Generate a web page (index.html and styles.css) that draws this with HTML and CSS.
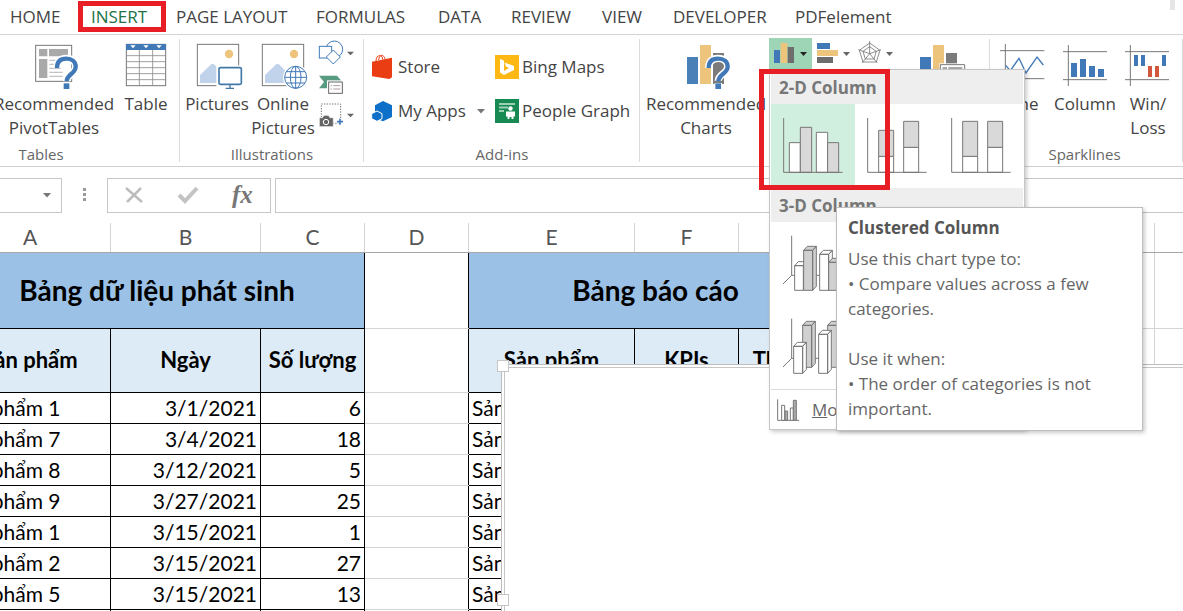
FILE: index.html
```html
<!DOCTYPE html>
<html lang="vi">
<head>
<meta charset="utf-8">
<title>Excel - Insert chart</title>
<link rel="stylesheet" href="styles.css">
</head>
<body>
<nav class="tabs">
  <a href="#">HOME</a>
  <a href="#" class="current">INSERT</a>
  <a href="#">PAGE LAYOUT</a>
  <a href="#">FORMULAS</a>
  <a href="#">DATA</a>
  <a href="#">REVIEW</a>
  <a href="#">VIEW</a>
  <a href="#">DEVELOPER</a>
  <a href="#">PDFelement</a>
  <span class="tab-grip"></span>
</nav>

<div class="ribbon">
  <section class="group group-tables">
    <div class="tools">
      <button class="big wide">
        <svg width="48" height="50" viewBox="90 126 144 150">
          <rect x="107" y="136" width="108" height="108" fill="#fff" stroke="#777" stroke-width="3"/>
          <path d="M117 147h25v22h-25zM147 147h57v22h-57zM117 177h25v57h-25z" fill="#a9a9a9"/>
          <path d="M148 181h38M148 193h34M148 205h34M148 217h40M148 229h40" stroke="#c3c3c3" stroke-width="4"/>
          <path d="M171 204c0-20 11-29 28-29s28 9 28 25c0 21-27 22-27 44M200 251v16" fill="none" stroke="#fff" stroke-width="22"/>
          <path d="M171 204c0-20 11-28 28-28s28 9 28 24c0 21-27 23-27 44" fill="none" stroke="#4179b8" stroke-width="13"/>
          <path d="M191 250h17v17h-17z" fill="#4179b8"/>
        </svg>
        <span>Recommended<br>PivotTables</span>
      </button>
      <button class="big narrow">
        <svg width="48" height="50" viewBox="366 126 144 150">
          <rect x="379" y="133" width="118" height="124" fill="#fff" stroke="#777" stroke-width="3"/>
          <path d="M418 150v107M458 150v107M379 167h118M379 185h118M379 203h118M379 221h118M379 239h118" stroke="#8a8a8a" stroke-width="2.500"/>
          <path d="M378 132h120v18H378z" fill="#4179b8"/>
          <path d="M391 136h16l-8 9zM430 136h16l-8 9zM469 136h16l-8 9z" fill="#fff"/>
        </svg>
        <span>Table</span>
      </button>
    </div>
    <h2>Tables</h2>
  </section>

  <section class="group group-illustrations">
    <div class="tools">
      <button class="big medium">
        <svg width="48" height="50" viewBox="576 126 144 150">
          <rect x="589" y="133" width="124" height="124" fill="#fff" stroke="#777" stroke-width="3"/>
          <circle cx="684" cy="162" r="12.500" fill="#edc47c"/>
          <path d="M597 249v-24l32-31c5-4 8-3 12 1l22 22v32z" fill="#c0d3ea"/>
          <path d="M646 196h82v76h-82z" fill="#fff"/>
          <rect x="654" y="203" width="67" height="50" rx="4" fill="#fff" stroke="#4179a8" stroke-width="5"/>
          <path d="M687 254v10M674 265h25" stroke="#4179a8" stroke-width="4"/>
        </svg>
        <span>Pictures</span>
      </button>
      <button class="big medium">
        <svg width="48" height="50" viewBox="777 126 144 150">
          <rect x="787" y="133" width="124" height="124" fill="#fff" stroke="#777" stroke-width="3"/>
          <circle cx="882" cy="162" r="12.500" fill="#edc47c"/>
          <path d="M795 249v-24l32-31c5-4 8-3 12 1l22 22v32z" fill="#c0d3ea"/>
          <circle cx="887" cy="232" r="38" fill="#fff"/>
          <g fill="none" stroke="#4179b8" stroke-width="3">
            <circle cx="887" cy="232" r="33"/>
            <ellipse cx="887" cy="232" rx="16" ry="33"/>
            <path d="M887 199v66M854 232h66M859 215h56M859 249h56"/>
          </g>
        </svg>
        <span>Online<br>Pictures</span>
      </button>
      <div class="stack">
        <button class="small" aria-label="Shapes">
          <svg width="37" height="31" viewBox="957 112 111 93">
            <circle cx="1003" cy="149" r="25" fill="#fff" stroke="#4179b8" stroke-width="3"/>
            <rect x="958" y="140" width="37" height="35" fill="#fff" stroke="#4179b8" stroke-width="3"/>
            <path d="M1000 151l21 21-21 21-21-21z" fill="#fff" stroke="#4179b8" stroke-width="3"/>
            <path d="M1041 156h21l-10.500 11z" fill="#666"/>
          </svg>
        </button>
        <button class="small" aria-label="SmartArt">
          <svg width="37" height="31" viewBox="957 205 111 93">
            <path d="M957 228h54l17 20-17 18h-54l15-19z" fill="#579b80"/>
            <rect x="985" y="246" width="43" height="36" fill="#fff" stroke="#fff" stroke-width="8"/>
            <rect x="986" y="247" width="41" height="34" fill="#fff" stroke="#666" stroke-width="3"/>
            <path d="M992 258h4M1000 258h21M992 268h4M1000 268h21" stroke="#a08888" stroke-width="2.500"/>
          </svg>
        </button>
        <button class="small" aria-label="Screenshot">
          <svg width="37" height="31" viewBox="957 298 111 93">
            <rect x="964" y="313" width="58" height="58" fill="none" stroke="#555" stroke-width="2.500" stroke-dasharray="4 4"/>
            <path d="M958 354h9l5-7h13l5 7h10v27h-42z" fill="#666" stroke="#fff" stroke-width="2"/>
            <circle cx="978" cy="367" r="8" fill="#666" stroke="#fff" stroke-width="3"/>
            <path d="M1020 356v20M1010 366h20" stroke="#fff" stroke-width="9"/>
            <path d="M1020 357v18M1011 366h18" stroke="#4179b8" stroke-width="5"/>
            <path d="M1041 342h21l-10.500 11z" fill="#666"/>
          </svg>
        </button>
      </div>
    </div>
    <h2>Illustrations</h2>
  </section>

  <section class="group group-addins">
    <div class="addins">
      <button class="line">
        <svg width="24" height="24" viewBox="36 162 72 72">
          <path d="M39 182l60-12v59l-8 5-52-8z" fill="#eb3d13"/>
          <path d="M51 180c0-11 5-16 11-16s9 4 9 12M59 177c1-10 5-14 9-14s9 4 10 11" fill="none" stroke="#eb3d13" stroke-width="3"/>
        </svg>Store</button>
      <button class="line">
        <svg width="24" height="24" viewBox="0 0 24 24">
          <path d="M0 0h24v24H0z" fill="#fdb813"/>
          <path d="M5 4l4 1.500v10.500l5-3-3-1.500-1.500-4L19 11v4l-10 5-4-2.500z" fill="#fff"/>
        </svg>Bing Maps</button>
      <button class="line">
        <svg width="24" height="24" viewBox="36 294 72 72">
          <path d="M72 300l27 13v35l-27 13-24-10v-38z" fill="#0d6fc7"/>
          <path d="M54 330l15 8v15l-15 8-16-8v-15z" fill="#0d6fc7" stroke="#fff" stroke-width="3"/>
        </svg>My Apps
        <svg class="arrow" width="8" height="5" viewBox="0 0 8 5"><path d="M0 0h8L4 4.500z" fill="#777"/></svg>
      </button>
      <button class="line">
        <svg width="24" height="24" viewBox="0 0 24 24">
          <path d="M0 0h24v24H0z" fill="#178a53"/>
          <path d="M4 5h16M4 8.500h9M4 12h5" stroke="#9bd0b5" stroke-width="2"/>
          <circle cx="15.500" cy="9.500" r="2.200" fill="#fff"/>
          <path d="M11 12.500h9v5h-1.500V20h-2v-2h-2v2h-2v-2.500H11z" fill="#fff"/>
        </svg>People Graph</button>
    </div>
    <h2>Add-ins</h2>
  </section>

  <section class="group group-charts">
    <div class="tools">
      <button class="big wide">
        <svg width="48" height="50" viewBox="966 126 144 150">
          <path d="M981 171h33v81h-33z" fill="#4a80b8"/>
          <path d="M1020 135h33v117h-33z" fill="#ecc47c"/>
          <path d="M1059 159h33v93h-33z" fill="#7b7b7b"/>
          <path d="M1046 204c0-20 11-29 28-29s29 9 29 25c0 21-28 22-28 42M1075 249v18" fill="none" stroke="#fff" stroke-width="22"/>
          <path d="M1046 204c0-20 11-28 28-28s29 9 29 24c0 20-28 23-28 44" fill="none" stroke="#4179b8" stroke-width="13"/>
          <path d="M1066 250h17v17h-17z" fill="#4179b8"/>
        </svg>
        <span>Recommended<br>Charts</span>
      </button>
      <div class="chart-types">
        <button class="small active" aria-label="Insert column chart">
          <svg width="43" height="31" viewBox="57 114 129 93">
            <path d="M72 150h18v39H72z" fill="#4179b8"/>
            <path d="M92 129h20v60H92z" fill="#ecc47c"/>
            <path d="M113 141h19v48h-19z" fill="#6d6d6d"/>
            <path d="M150 156h21l-10.500 12z" fill="#222"/>
          </svg>
        </button>
        <button class="small" aria-label="Insert bar chart">
          <svg width="43" height="31" viewBox="186 114 129 93">
            <path d="M201 129h39v18h-39z" fill="#4179b8"/>
            <path d="M201 150h63v18h-63z" fill="#ecc47c"/>
            <path d="M201 171h48v18h-48z" fill="#6d6d6d"/>
            <path d="M279 156h21l-10.500 12z" fill="#666"/>
          </svg>
        </button>
        <button class="small" aria-label="Insert radar chart">
          <svg width="43" height="31" viewBox="315 114 129 93">
            <g fill="none" stroke="#777" stroke-width="2.500">
              <path d="M359 129l31 22-11 35h-40l-11-35zM359 140l20 14-7 23h-26l-7-23z"/>
              <path d="M359 123v38M359 161l34-12M359 161l23 28M359 161l-23 28M359 161l-34-12"/>
            </g>
            <path d="M408 156h21l-10.500 12z" fill="#666"/>
          </svg>
        </button>

        <div class="menu">
          <h3>2-D Column</h3>
          <div class="options">
            <button class="option chosen" aria-label="Clustered Column">
              <svg width="84" height="84" viewBox="63 312 252 252" fill="#fff" stroke="#777" stroke-width="3">
                <path d="M118 428h33v89h-33zM199 397h34v120h-34z"/>
                <path d="M151 382h34v135h-34zM233 428h33v89h-33z" fill="#d9d9d9"/>
                <path d="M101 354v163h177" fill="none"/>
              </svg>
            </button>
            <button class="option" aria-label="Stacked Column">
              <svg width="84" height="84" viewBox="315 312 252 252" fill="#fff" stroke="#777" stroke-width="3">
                <path d="M386 469h45v48h-45zM461 442h45v75h-45z"/>
                <path d="M386 391h45v78h-45zM461 364h45v78h-45z" fill="#d9d9d9"/>
                <path d="M353 354v163h177" fill="none"/>
              </svg>
            </button>
            <button class="option" aria-label="100% Stacked Column">
              <svg width="84" height="84" viewBox="567 312 252 252" fill="#fff" stroke="#777" stroke-width="3">
                <path d="M638 469h45v48h-45zM713 442h45v75h-45z"/>
                <path d="M638 364h45v105h-45zM713 364h45v78h-45z" fill="#d9d9d9"/>
                <path d="M605 354v163h177" fill="none"/>
              </svg>
            </button>
          </div>
          <h3>3-D Column</h3>
          <div class="options">
            <button class="option" aria-label="3-D Clustered Column">
              <svg width="84" height="84" viewBox="33 123 252 252" fill="#fff" stroke="#777" stroke-width="3" stroke-linejoin="round">
                <path d="M95 164v119M69 309l26-26h150" fill="none"/>
                <path d="M104 254l11-12h25l-10 12zM104 254h26v74h-26z"/>
                <path d="M131 208l11-12h27l-11 12zM131 208h27v120h-27zM158 208l11-12v120l-11 12z" fill="#d0d0d0"/>
                <path d="M179 220l11-12h27l-11 12zM179 220h27v108h-27zM206 220l11-12v108l-11 12z"/>
                <path d="M206 244l11-12h27l-11 12zM206 244h27v84h-27z" fill="#d0d0d0"/>
              </svg>
            </button>
          </div>
          <div class="options">
            <button class="option" aria-label="3-D Column">
              <svg width="84" height="84" viewBox="33 375 252 252" fill="#fff" stroke="#777" stroke-width="3" stroke-linejoin="round">
                <path d="M95 416v119M69 561l26-26h150" fill="none"/>
                <path d="M128 436l11-12h27l-11 12zM128 436h27v126h-27zM155 436l11-12v126l-11 12z" fill="#d0d0d0"/>
                <path d="M101 499l11-12h27l-11 12zM101 499h27v81h-27zM128 499l11-12v81l-11 12z"/>
                <path d="M203 436l11-12h27l-11 12zM203 436h27v126h-27z" fill="#d0d0d0"/>
                <path d="M176 463l11-12h27l-11 12zM176 463h27v117h-27zM203 463l11-12v117l-11 12z"/>
              </svg>
            </button>
          </div>
          <button class="more">
            <svg width="22" height="22" viewBox="51 654 66 66" fill="#fff" stroke="#777" stroke-width="3">
              <path d="M53 655v63h64" fill="none"/>
              <path d="M65 673h9v45h-9zM91 681h9v37h-9z"/>
              <path d="M75 690h8v28h-8zM100 658h9v60h-9z" fill="#aaa"/>
            </svg>
            <span><u>M</u>ore Column Charts...</span>
          </button>
          <span class="highlight"></span>
          <div class="tooltip" role="tooltip">
            <strong>Clustered Column</strong>
            <p>Use this chart type to:<br>• Compare values across a few categories.</p>
            <p>Use it when:<br>• The order of categories is not important.</p>
          </div>
        </div>
      </div>
      <button class="big pivot" aria-label="PivotChart">
        <svg width="48" height="50" viewBox="54 126 144 150">
          <path d="M60 171h33v81H60z" fill="#4179b8"/>
          <path d="M99 135h33v117H99z" fill="#ecc47c"/>
          <path d="M138 159h33v93h-33z" fill="#7b7b7b"/>
          <path d="M118 190h79v60h-79z" fill="#fff"/>
          <path d="M121 194h73v56h-73z" fill="#fff" stroke="#777" stroke-width="3"/>
          <path d="M128 205h13M145 205h42" stroke="#aaa" stroke-width="8"/>
        </svg>
      </button>
    </div>
  </section>

  <section class="group group-sparklines">
    <div class="tools">
      <button class="big medium">
        <svg width="48" height="50" viewBox="297 126 144 150">
          <path d="M319 132v126M303 152h133M303 236h133" stroke="#777" stroke-width="3"/>
          <path d="M320 196l14 16 26-37 21 44 33-48 19 24" fill="none" stroke="#4179b8" stroke-width="4"/>
        </svg>
        <span>Line</span>
      </button>
      <button class="big column">
        <svg width="48" height="50" viewBox="483 126 144 150">
          <path d="M505 135v123M489 155h132M489 239h132" stroke="#777" stroke-width="3"/>
          <path d="M513 189h18v42h-18zM540 177h18v54h-18zM567 198h18v33h-18zM594 207h18v24h-18z" fill="#4179b8"/>
        </svg>
        <span>Column</span>
      </button>
      <button class="big medium">
        <svg width="48" height="50" viewBox="672 126 144 150">
          <path d="M691 135v123M675 155h132M675 239h132" stroke="#777" stroke-width="3"/>
          <path d="M702 165h12v33h-12zM723 165h12v33h-12zM786 165h12v33h-12z" fill="#4179b8"/>
          <path d="M744 198h12v33h-12zM765 198h12v33h-12z" fill="#d2573d"/>
        </svg>
        <span>Win/<br>Loss</span>
      </button>
    </div>
    <h2>Sparklines</h2>
  </section>
</div>

<div class="formula-bar">
  <div class="name-box">
    <input type="text" aria-label="Name box">
    <svg width="8" height="5" viewBox="0 0 8 5"><path d="M0 0h8L4 4.500z" fill="#777"/></svg>
  </div>
  <svg width="4" height="14" viewBox="0 0 4 14"><path d="M0 0h3v3H0zM0 5h3v3H0zM0 10h3v3H0z" fill="#999"/></svg>
  <div class="entry-tools">
    <button aria-label="Cancel"><svg width="18" height="18" viewBox="0 0 18 18"><path d="M1 2l16 14M16 2L2 16" stroke="#bdbdbd" stroke-width="2.500"/></svg></button>
    <button aria-label="Enter"><svg width="20" height="18" viewBox="0 0 20 18"><path d="M1 9l6 6L19 2" fill="none" stroke="#c3c3c3" stroke-width="4"/></svg></button>
    <button class="fx" aria-label="Insert function">fx</button>
  </div>
  <input class="formula" type="text" aria-label="Formula">
</div>

<main class="sheet">
  <table>
    <colgroup><col class="c-a"><col class="c-b"><col class="c-n"><col class="c-n"><col class="c-e"><col class="c-n"><col class="c-n"><col class="c-n"><col class="c-n"><col class="c-n"><col></colgroup>
    <thead>
      <tr class="letters"><th>A</th><th>B</th><th>C</th><th>D</th><th>E</th><th>F</th><th>G</th><th>H</th><th>I</th><th>J</th><th></th></tr>
    </thead>
    <tbody>
      <tr class="title"><th colspan="3">Bảng dữ liệu phát sinh</th><td class="gap"></td><th colspan="3">Bảng báo cáo</th><td></td><td></td><td></td><td></td></tr>
      <tr class="heads"><th>Sản phẩm</th><th>Ngày</th><th>Số lượng</th><td class="gap"></td><th>Sản phẩm</th><th>KPIs</th><th>Thực tế</th><td></td><td></td><td></td><td></td></tr>
      <tr><td class="k name">Sản phẩm 1</td><td class="k num">3/1/2021</td><td class="k num">6</td><td class="gap"></td><td class="k name">Sản phẩm 1</td><td class="k"></td><td class="k"></td><td></td><td></td><td></td><td></td></tr>
      <tr><td class="k name">Sản phẩm 7</td><td class="k num">3/4/2021</td><td class="k num">18</td><td class="gap"></td><td class="k name">Sản phẩm 2</td><td class="k"></td><td class="k"></td><td></td><td></td><td></td><td></td></tr>
      <tr><td class="k name">Sản phẩm 8</td><td class="k num">3/12/2021</td><td class="k num">5</td><td class="gap"></td><td class="k name">Sản phẩm 3</td><td class="k"></td><td class="k"></td><td></td><td></td><td></td><td></td></tr>
      <tr><td class="k name">Sản phẩm 9</td><td class="k num">3/27/2021</td><td class="k num">25</td><td class="gap"></td><td class="k name">Sản phẩm 4</td><td class="k"></td><td class="k"></td><td></td><td></td><td></td><td></td></tr>
      <tr><td class="k name">Sản phẩm 1</td><td class="k num">3/15/2021</td><td class="k num">1</td><td class="gap"></td><td class="k name">Sản phẩm 5</td><td class="k"></td><td class="k"></td><td></td><td></td><td></td><td></td></tr>
      <tr><td class="k name">Sản phẩm 2</td><td class="k num">3/15/2021</td><td class="k num">27</td><td class="gap"></td><td class="k name">Sản phẩm 6</td><td class="k"></td><td class="k"></td><td></td><td></td><td></td><td></td></tr>
      <tr><td class="k name">Sản phẩm 5</td><td class="k num">3/15/2021</td><td class="k num">13</td><td class="gap"></td><td class="k name">Sản phẩm 7</td><td class="k"></td><td class="k"></td><td></td><td></td><td></td><td></td></tr>
      <tr><td class="k"></td><td class="k"></td><td class="k"></td><td class="gap"></td><td class="k"></td><td class="k"></td><td class="k"></td><td></td><td></td><td></td><td></td></tr>
    </tbody>
  </table>
  <div class="chart-object">
    <div class="chart-area"></div>
    <span class="handle corner"></span>
    <span class="handle middle"></span>
  </div>
</main>
</body>
</html>
```
FILE: styles.css
```css
* { box-sizing: border-box; }

body {
  margin: 0;
  height: 100vh;
  overflow: hidden;
  display: flex;
  flex-direction: column;
  background: #fff;
  color: #444;
  font: 17px/24px "Open Sans", "Noto Sans", sans-serif;
}

button {
  padding: 0;
  border: 0;
  background: none;
  color: inherit;
  font: inherit;
}

svg { display: block; flex: none; overflow: visible; }
input { border: 0; outline: 0; background: none; }

/* Ribbon tabs */
.tabs {
  flex: none;
  display: grid;
  grid-template-columns: 68px 88px 140px 122px 73px 91px 71px 122px 1fr auto;
  height: 35px;
  padding-left: 10px;
  border-bottom: 1px solid #d4d4d4;
  line-height: 33px;
  white-space: nowrap;
}
.tabs a { color: #444; text-decoration: none; }
.tabs .current {
  height: 31px;
  margin-top: 1px;
  padding-left: 8px;
  border: 5px solid #e81e26;
  color: #217346;
  line-height: 21px;
}
.tabs a:nth-child(n+3) { padding-left: 10px; }
.tab-grip { width: 5px; height: 10px; margin-right: 8px; background: #e6e6e6; }

/* Ribbon */
.ribbon {
  flex: none;
  display: flex;
  height: 132px;
  margin-left: -98px;
  border-bottom: 1px solid #d0d0d0;
}
.group {
  position: relative;
  display: flex;
  flex-direction: column;
  justify-content: space-between;
}
.group::after {
  content: "";
  position: absolute;
  top: 4px;
  right: 0;
  bottom: 4px;
  border-right: 1px solid #dcdcdc;
}
.group-tables { width: 278px; }
.group-illustrations { width: 184px; }
.group-addins { width: 276px; }
.group-charts { flex: 1; min-width: 350px; }
.group-sparklines { width: 193px; }
.group h2 {
  margin: 0;
  color: #666;
  font-size: 15px;
  font-weight: 400;
  line-height: 24px;
  text-align: center;
}
.group-sparklines h2 { padding-right: 4px; }
.tools { display: flex; align-items: flex-start; }
.group-tables .tools { justify-content: flex-end; gap: 6px; padding-right: 8px; }
.group-illustrations .tools { padding-left: 4px; }
.group-charts .tools { padding-left: 6px; gap: 3px; }

.big {
  display: flex;
  flex: none;
  flex-direction: column;
  align-items: center;
  padding-top: 7px;
  white-space: nowrap;
}
.wide { width: 120px; }
.narrow { width: 52px; }
.medium { width: 64px; }
.column { width: 62px; }
.group-illustrations .medium { width: 66px; }
.stack { display: grid; padding: 2px 0 0 3px; }
.small { display: block; }
.active { background: #9fd5b7; }
.chart-types { position: relative; display: flex; padding-top: 3px; }
.pivot { margin-left: 17px; }

.addins {
  display: grid;
  grid-template-columns: 124px 1fr;
  grid-auto-rows: 44px;
  padding: 10px 0 0 7px;
}
.line { display: flex; align-items: center; gap: 3px; white-space: nowrap; }
.arrow { margin-left: 8px; }

/* Chart type menu */
.menu {
  position: absolute;
  z-index: 2;
  top: 34px;
  left: 0;
  width: 256px;
  padding: 0 1px;
  border: 1px solid #c6c6c6;
  background: #fff;
  box-shadow: 2px 2px 4px rgba(0, 0, 0, 0.2);
}
.menu h3 {
  height: 34px;
  margin: 0;
  padding: 2px 0 0 8px;
  background: #eee;
  color: #777;
  font-size: 17px;
  line-height: 32px;
}
.options { display: flex; height: 84px; }
.options + .options { margin-top: -1px; }
.option { display: block; }
.chosen { background: #d1efdf; }
.more {
  display: flex;
  align-items: center;
  gap: 13px;
  width: 100%;
  height: 40px;
  padding-left: 6px;
  border-top: 1px solid #dcdcdc;
  color: #666;
  white-space: nowrap;
}
.highlight {
  position: absolute;
  top: -1px;
  left: -11px;
  width: 131px;
  height: 121px;
  border: 5px solid #e81e26;
}
.tooltip {
  position: absolute;
  top: 137px;
  left: 66px;
  width: 307px;
  padding: 7px 11px 9px;
  border: 1px solid #bdbdbd;
  background: #fff;
  box-shadow: 2px 2px 4px rgba(0, 0, 0, 0.2);
  color: #666;
  line-height: 25px;
}
.tooltip strong { display: block; margin-bottom: 6px; color: #555; }
.tooltip p { margin: 0; }
.tooltip p + p { margin-top: 25px; }

/* Formula bar */
.formula-bar {
  flex: none;
  display: flex;
  align-items: center;
  height: 56px;
}
.name-box, .entry-tools, .formula { height: 35px; border: 1px solid #c6c6c6; }
.name-box {
  display: flex;
  align-items: center;
  width: 62px;
  margin-right: 21px;
  padding-right: 10px;
  border-left: 0;
}
.name-box input { width: 43px; }
.entry-tools {
  display: flex;
  align-items: center;
  justify-content: space-around;
  width: 164px;
  margin: 0 4px 0 20px;
}
.fx { font: italic bold 25px/24px "Liberation Serif", serif; color: #777; }
.formula { flex: 1; min-width: 0; border-right: 0; }

/* Worksheet */
.sheet { position: relative; flex: 1; min-height: 0; overflow: hidden; }
table {
  width: 100%;
  min-width: 1235px;
  margin-left: -51px;
  border-collapse: collapse;
  table-layout: fixed;
  color: #000;
  font: 21px/24px Lato, "Open Sans", sans-serif;
}
.c-a { width: 161px; }
.c-b { width: 150px; }
.c-n { width: 104px; }
.c-e { width: 166px; }
th, td { height: 31px; padding: 0 3px; border: 1px solid #d4d4d4; white-space: nowrap; overflow: hidden; }
.letters th {
  height: 29px;
  border-top: 0;
  border-bottom-color: #a6a6a6;
  color: #555;
  font-weight: 400;
}
.title th, .title td { height: 76px; }
.title th, .heads th, .k { border: 1px solid #000; }
.title th { border-top-color: #a6a6a6; background: #9bc2e6; font-size: 28px; }
.heads th, .heads td { height: 64px; }
.heads th { padding: 0; background: #ddebf7; font-size: 22px; }
.gap { border-right-color: #000; }
.num { text-align: right; }
.chart-object {
  position: absolute;
  top: 141px;
  right: -20px;
  bottom: -20px;
  left: 501px;
  padding: 2px;
  border: 1px solid #bdbdbd;
  background: #fff;
}
.chart-area { height: 100%; border: 1px solid #c6c6c6; }
.handle {
  position: absolute;
  left: -5px;
  width: 12px;
  height: 12px;
  border: 1px solid #c6c6c6;
  background: #fff;
}
.corner { top: -5px; }
.middle { top: 229px; }
```
